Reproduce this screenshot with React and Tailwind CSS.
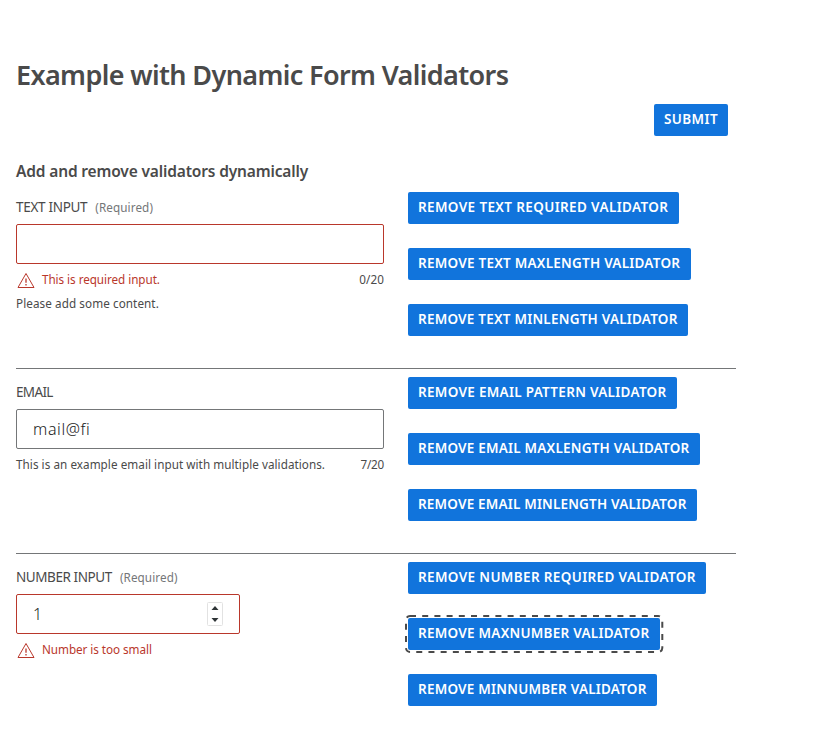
import React from "react";

function Button({ children, className }) {
  return (
    <button
      type="button"
      className={`flex h-8 items-center whitespace-nowrap rounded-xs bg-[#1174dc] pb-0.5 pl-2.5 text-[13.5px] font-semibold text-white ${className}`}
    >
      {children}
    </button>
  );
}

function Label({ children, className, required }) {
  return (
    <div className="flex h-8 items-center gap-2 whitespace-nowrap pb-px">
      <span className={`text-[13.5px] text-[#4a4a4a] ${className}`}>{children}</span>
      {required && <span className="text-[11.7px] tracking-[0.1px] text-[#747678]">(Required)</span>}
    </div>
  );
}

function Warning() {
  return (
    <svg className="ml-px h-[18px] w-[18px] shrink-0" viewBox="0 0 18 18" fill="none" stroke="#b9372b">
      <path d="M9 2.5 L17 16.5 H1 Z" strokeWidth="1" strokeLinejoin="round" />
      <path d="M9 7.4v4.4M9 13v1.4" strokeWidth="1.3" />
    </svg>
  );
}

function Row({ children, buttons }) {
  return (
    <div className="flex h-[176px] gap-6">
      <div className="w-[368px]">{children}</div>
      <div className="flex flex-col items-start gap-6">{buttons}</div>
    </div>
  );
}

export default function App() {
  return (
    <main className="h-[746px] w-full bg-white px-4 pt-[55px] font-['Noto_Sans','Open_Sans',sans-serif] text-[#4a4a4a]">
      <div className="w-[720px]">
        <h1 className="h-[49px] whitespace-nowrap text-[27px] font-semibold leading-10 tracking-[-0.63px]">
          Example with Dynamic Form Validators
        </h1>
        <div className="flex justify-end pr-2">
          <Button className="w-[74px] tracking-[0.4px]">SUBMIT</Button>
        </div>
        <h2 className="mt-[23px] h-[33px] whitespace-nowrap text-[15.5px] font-semibold leading-6 tracking-[-0.15px]">
          Add and remove validators dynamically
        </h2>

        <Row
          buttons={
            <>
              <Button className="w-[271.3px] tracking-[0.37px]">REMOVE TEXT REQUIRED VALIDATOR</Button>
              <Button className="w-[283.4px] tracking-[0.24px]">REMOVE TEXT MAXLENGTH VALIDATOR</Button>
              <Button className="w-[280.4px] tracking-[0.22px]">REMOVE TEXT MINLENGTH VALIDATOR</Button>
            </>
          }
        >
          <Label required className="tracking-[-0.3px]">TEXT INPUT</Label>
          <div className="h-10 rounded-xs border border-[#b9372b]" />
          <div className="flex h-8 items-center whitespace-nowrap text-[11.7px]">
            <Warning />
            <span className="ml-[7px] tracking-[-0.05px] text-[#b9372b]">This is required input.</span>
            <span className="ml-auto tracking-[0.1px]">0/20</span>
          </div>
          <p className="-mt-px text-[11.7px] leading-4 tracking-[0.08px]">Please add some content.</p>
        </Row>

        <div className="border-t border-[#747678] pt-2">
          <Row
            buttons={
              <>
                <Button className="w-[268.6px] tracking-[0.3px]">REMOVE EMAIL PATTERN VALIDATOR</Button>
                <Button className="w-[292.4px] tracking-[0.21px]">REMOVE EMAIL MAXLENGTH VALIDATOR</Button>
                <Button className="w-[289.4px] tracking-[0.18px]">REMOVE EMAIL MINLENGTH VALIDATOR</Button>
              </>
            }
          >
            <Label className="tracking-[-0.65px]">EMAIL</Label>
            <div className="flex h-10 items-center rounded-xs border border-[#747678] px-4 text-base font-light tracking-[0.6px] text-[#222]">
              mail@fi
            </div>
            <div className="flex h-8 items-center justify-between whitespace-nowrap text-[11.7px]">
              <span className="tracking-[0.05px]">This is an example email input with multiple validations.</span>
              <span className="tracking-[-0.2px]">7/20</span>
            </div>
          </Row>
        </div>

        <div className="border-t border-[#747678] pt-2">
          <Row
            buttons={
              <>
                <Button className="w-[298.4px] tracking-[0.36px]">REMOVE NUMBER REQUIRED VALIDATOR</Button>
                <div className="relative">
                  <Button className="w-[252.3px] tracking-[0.25px]">REMOVE MAXNUMBER VALIDATOR</Button>
                  <svg className="absolute -left-[3px] -top-[3px] h-[38px] w-[259px]" fill="none">
                    <rect x="1" y="1" width="256.3" height="36" rx="4" stroke="#4a4a4a" strokeWidth="2" strokeDasharray="6 6.2" />
                  </svg>
                </div>
                <Button className="w-[249.2px] tracking-[0.22px]">REMOVE MINNUMBER VALIDATOR</Button>
              </>
            }
          >
            <Label required className="tracking-[-0.42px]">NUMBER INPUT</Label>
            <div className="flex h-10 w-[224px] items-center justify-between rounded-xs border border-[#b9372b] px-4 text-base font-light text-[#222]">
              <span>1</span>
              <svg className="h-6 w-4" viewBox="0 0 16 24">
                <rect x=".5" y=".5" width="15" height="23" rx="1" fill="#fff" stroke="#e2e2e2" />
                <path d="M8 4 L11.5 8 H4.5 Z M8 20 L11.5 16 H4.5 Z" fill="#2e3436" />
              </svg>
            </div>
            <div className="flex h-8 items-center whitespace-nowrap text-[11.7px]">
              <Warning />
              <span className="ml-[7px] tracking-[-0.05px] text-[#b9372b]">Number is too small</span>
            </div>
          </Row>
        </div>
      </div>
    </main>
  );
}
